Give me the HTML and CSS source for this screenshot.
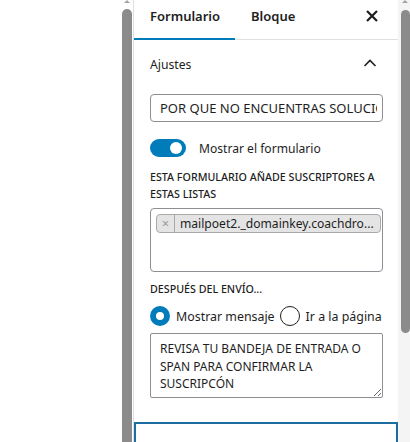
FILE: index.html
```html
<!DOCTYPE html>
<html lang="es">
<head>
    <meta charset="UTF-8">
    <meta name="viewport" content="width=device-width, initial-scale=1.0">
    <title>Formulario - Ajustes</title>
    <link rel="stylesheet" href="styles.css">
</head>
<body>
    <div class="page">
        <div class="canvas"></div>

        <!-- scrollbar of the editor canvas -->
        <div class="canvas-scroll">
            <span class="scroll-arrow"></span>
            <div class="scroll-thumb"></div>
        </div>

        <aside class="sidebar">
            <div class="tabs">
                <button class="tab active">Formulario</button>
                <button class="tab">Bloque</button>
                <button class="close" aria-label="Cerrar">
                    <svg width="24" height="24" viewBox="0 0 24 24">
                        <path d="M7 7 L17 17 M17 7 L7 17" stroke="#1e1e1e" stroke-width="2.2" fill="none"/>
                    </svg>
                </button>
            </div>

            <div class="panel">
                <div class="panel-head">
                    <span>Ajustes</span>
                    <svg width="24" height="24" viewBox="0 0 24 24">
                        <path d="M6.5 14 L12 8.5 L17.5 14" stroke="#1e1e1e" stroke-width="1.6" fill="none"/>
                    </svg>
                </div>

                <input class="text-input" type="text" value="POR QUE NO ENCUENTRAS SOLUCIONES">

                <label class="toggle-row">
                    <span class="toggle"><span class="toggle-knob"></span></span>
                    Mostrar el formulario
                </label>

                <p class="label">ESTA FORMULARIO AÑADE SUSCRIPTORES A ESTAS LISTAS</p>
                <div class="tagbox">
                    <span class="chip">
                        <span class="chip-x">×</span>
                        <span class="chip-text">mailpoet2._domainkey.coachdro...</span>
                    </span>
                </div>

                <p class="label label-after">DESPUÉS DEL ENVÍO...</p>
                <div class="radios">
                    <span class="radio checked"></span>
                    <span class="radio-text">Mostrar mensaje</span>
                    <span class="radio"></span>
                    <span class="radio-text">Ir a la página</span>
                </div>

                <textarea class="message">REVISA TU BANDEJA DE ENTRADA O SPAN PARA CONFIRMAR LA SUSCRIPCÓN</textarea>
            </div>

            <div class="next-box"></div>
        </aside>

        <!-- scrollbar of the sidebar -->
        <div class="side-scroll">
            <span class="scroll-arrow"></span>
            <div class="scroll-thumb"></div>
        </div>
    </div>
</body>
</html>
```

FILE: styles.css
```css
body {
    margin: 0;
    padding: 0;
    font-family: "Noto Sans", "Open Sans", sans-serif;
    font-size: 12.1px;
    color: #1e1e1e;
    background: #fff;
}

.page {
    display: flex;
    width: 410px;
    height: 442px;
    overflow: hidden;
}

.canvas {
    width: 121px;
    flex: none;
    background: #fff;
}

/* Scrollbars */
.canvas-scroll,
.side-scroll {
    flex: none;
    display: flex;
    flex-direction: column;
    align-items: center;
}

.canvas-scroll {
    width: 12px;
    background: #fff;
}

.side-scroll {
    width: 12px;
    background: #f4f4f4;
    align-items: flex-end;
}

.scroll-arrow {
    width: 0;
    height: 0;
    border-left: 3px solid transparent;
    border-right: 3px solid transparent;
    border-bottom: 3px solid #a3a3a3;
    margin-bottom: 6px;
}

.side-scroll .scroll-arrow {
    margin-right: 2px;
    margin-bottom: 7px;
}

.scroll-thumb {
    width: 10px;
    background: #8b8b8b;
    border-radius: 5px 5px 0 0;
    flex: 1;
}

.side-scroll .scroll-thumb {
    width: 9px;
    flex: none;
    height: 323px;
    border-radius: 5px;
}

/* Sidebar */
.sidebar {
    width: 264px;
    flex: none;
    border-left: 1px solid #e0e0e0;
    background: #fff;
}

.tabs {
    display: flex;
    align-items: flex-start;
    height: 39px;
    border-bottom: 1px solid #e0e0e0;
}

.tab {
    position: relative;
    padding: 6px 16px 13px;
    border: none;
    background: none;
    font-family: inherit;
    font-size: 13px;
    font-weight: 600;
    line-height: 20px;
    color: #1e1e1e;
    text-align: left;
}

.tab.active {
    width: 101px;
}

.tab.active::after {
    content: "";
    position: absolute;
    left: 0;
    right: 0;
    bottom: -1px;
    height: 2px;
    background: #007cba;
}

.close {
    margin-left: auto;
    margin-right: 14px;
    margin-top: 4px;
    padding: 0;
    width: 24px;
    height: 24px;
    border: none;
    background: none;
}

.panel {
    display: flex;
    flex-direction: column;
    padding: 0 15px 0 16px;
}

.panel-head {
    display: flex;
    align-items: center;
    justify-content: space-between;
    height: 48px;
    font-size: 12.2px;
    margin-right: 1px;
}

.text-input {
    margin-top: 6px;
    height: 28px;
    padding: 0 5px 0 9px;
    border: 1px solid #8c8f94;
    border-radius: 4px;
    box-sizing: border-box;
    font-family: inherit;
    font-size: 13px;
    color: #1e1e1e;
    width: 100%;
}

.toggle-row {
    display: flex;
    align-items: center;
    gap: 13px;
    margin-top: 17px;
    height: 18px;
}

.toggle {
    display: flex;
    align-items: center;
    justify-content: flex-end;
    width: 36px;
    height: 18px;
    border-radius: 9px;
    background: #007cba;
    padding: 0 4px;
    box-sizing: border-box;
}

.toggle-knob {
    width: 12px;
    height: 12px;
    border-radius: 50%;
    background: #fff;
}

.label {
    margin: 12px 0 0;
    font-size: 10.7px;
    font-weight: 500;
    line-height: 17px;
    text-transform: uppercase;
}

.label-after {
    margin-top: 9px;
}

.tagbox {
    margin-top: 5px;
    height: 64px;
    box-sizing: border-box;
    border: 1px solid #8c8f94;
    border-radius: 4px;
    padding: 5px 1px 0 5px;
}

.chip {
    display: flex;
    align-items: center;
    height: 19px;
    box-sizing: border-box;
    background: #e4e4e4;
    border: 1px solid #aaa;
    border-radius: 4px;
}

.chip-x {
    width: 17px;
    text-align: center;
    color: #999;
    font-size: 13px;
    line-height: 17px;
    border-right: 1px solid #aaa;
}

.chip-text {
    padding-left: 5px;
    white-space: nowrap;
    overflow: hidden;
    line-height: 17px;
}

.radios {
    display: flex;
    align-items: center;
    height: 20px;
    margin-top: 8px;
    white-space: nowrap;
    font-size: 12.4px;
}

.radio {
    width: 20px;
    height: 20px;
    box-sizing: border-box;
    border: 1.5px solid #1e1e1e;
    border-radius: 50%;
    flex: none;
}

.radio.checked {
    border: 6px solid #007cba;
    background: #fff;
}

.radio-text {
    margin-left: 6px;
    margin-right: 5px;
}

.message {
    margin-top: 7px;
    height: 65px;
    box-sizing: border-box;
    padding: 6px 1px 0 9px;
    border: 1px solid #8c8f94;
    border-radius: 2px;
    overflow: hidden;
    font-family: inherit;
    font-size: 12px;
    line-height: 17.5px;
    color: #1e1e1e;
    width: 100%;
}

.next-box {
    margin-top: 24px;
    height: 30px;
    border: 2px solid #1b6e9f;
    border-bottom: none;
}
```
